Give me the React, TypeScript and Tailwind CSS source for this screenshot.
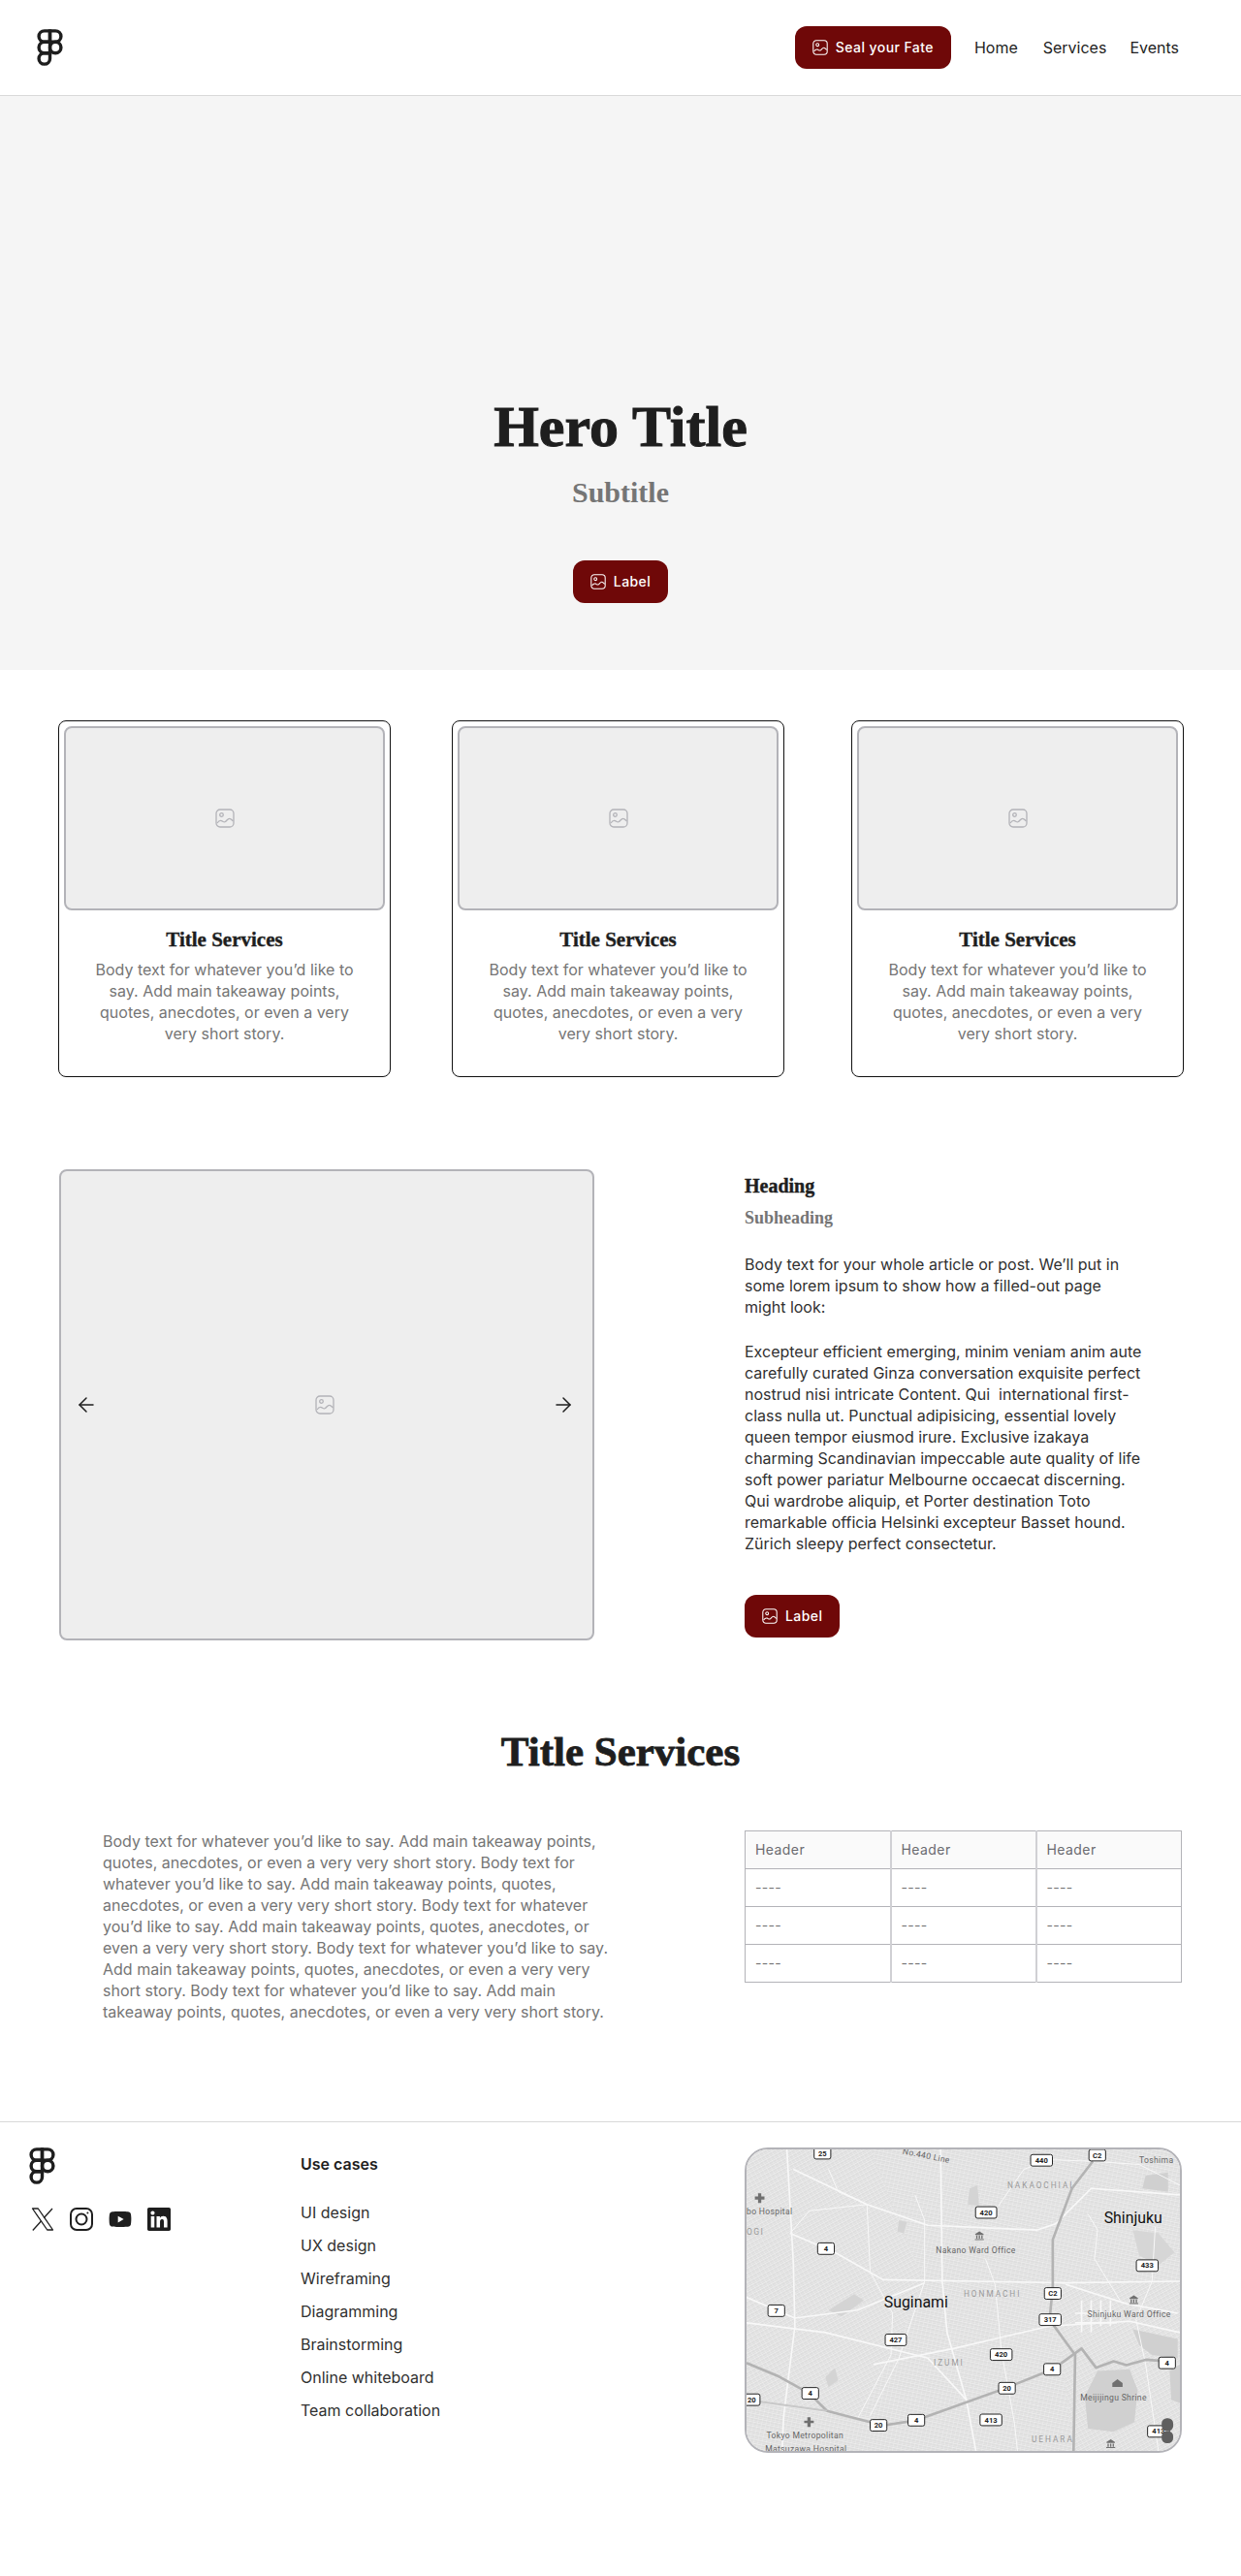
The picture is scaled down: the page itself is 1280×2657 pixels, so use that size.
import { ArrowLeft, ArrowRight } from "lucide-react";
import { FaLinkedin, FaYoutube } from "react-icons/fa6";

const BLURB = "Body text for whatever you’d like to say. Add main takeaway points, quotes, anecdotes, or even a very very short story.";
const LONG_BLURB = [BLURB, BLURB, BLURB, BLURB, BLURB].join(" ");
const ARTICLE = "Excepteur efficient emerging, minim veniam anim aute carefully curated Ginza conversation exquisite perfect nostrud nisi intricate Content. Qui\u00a0 international first-class nulla ut. Punctual adipisicing, essential lovely queen tempor eiusmod irure. Exclusive izakaya charming Scandinavian impeccable aute quality of life soft power pariatur Melbourne occaecat discerning. Qui wardrobe aliquip, et Porter destination Toto remarkable officia Helsinki excepteur Basset hound. Zürich sleepy perfect consectetur.";
const USE_CASES = ["UI design", "UX design", "Wireframing", "Diagramming", "Brainstorming", "Online whiteboard", "Team collaboration"];

const ImageIcon = ({ className }: { className?: string }) => (
  <svg viewBox="0 0 20 20" fill="none" stroke="currentColor" strokeWidth="1.3" className={className}>
    <rect x="1" y="1" width="18" height="18" rx="4" />
    <circle cx="6.5" cy="6.5" r="1.8" />
    <path d="M2 15c1.5-2.2 3-3 4.5-2.4S9 14.6 10.500 13.500s2.500-3.200 4-3.200 2.500 1.200 4 2.700" />
  </svg>
);

const FigmaLogo = ({ className }: { className?: string }) => (
  <svg viewBox="-2 -2 28 40" fill="none" stroke="#1e1e1e" strokeWidth="3.600" className={className}>
    <path d="M12 0H6a6 6 0 0 0 0 12h6z" />
    <path d="M12 0h6a6 6 0 0 1 0 12h-6z" />
    <path d="M12 12H6a6 6 0 0 0 0 12h6z" />
    <circle cx="18" cy="18" r="6" />
    <path d="M6 24h6v6a6 6 0 1 1-6-6z" />
  </svg>
);

const XLogo = () => (
  <svg viewBox="0 0 24 24" fill="none" stroke="#1e1e1e" className="h-6 w-6">
    <path d="M1.500 1h5.800l15.200 22h-5.800z" strokeWidth="1.300" strokeLinejoin="round" />
    <path d="M22 1l-8.800 9.800M10.600 13.700 1.800 23.500" strokeWidth="1.300" />
  </svg>
);

const InstagramLogo = () => (
  <svg viewBox="0 0 24 24" fill="none" stroke="#1e1e1e" strokeWidth="2" className="h-6 w-6">
    <rect x="1" y="1" width="22" height="22" rx="6" />
    <circle cx="12" cy="12" r="5.500" />
    <circle cx="18.400" cy="5.600" r="1" fill="#1e1e1e" stroke="none" />
  </svg>
);

const LabelButton = ({ children = "Label" }: { children?: string }) => (
  <button className="flex h-11 items-center gap-2 rounded-xl bg-[#6f0808] px-[18px] font-['Inter',sans-serif] text-sm font-medium tracking-[0.03em] text-white">
    <ImageIcon className="h-4 w-4" />
    {children}
  </button>
);

const ServiceCard = ({ className }: { className: string }) => (
  <div className={`h-[368px] w-[343px] shrink-0 rounded-lg border border-[#111111] p-[5px] ${className}`}>
    <div className="flex h-[190px] items-center justify-center rounded-lg border-2 border-[#b3b3b8] bg-[#eeeeee] text-[#b3b3b8]">
      <ImageIcon className="h-5 w-5" />
    </div>
    <h3 className="mt-4 text-center font-['Liberation_Serif',serif] text-[21px] font-bold leading-[29px] text-[#1e1e1e] [-webkit-text-stroke:0.4px_#1e1e1e]">Title Services</h3>
    <p className="mx-auto mt-[5px] w-[290px] text-center text-base leading-[22px] text-[#757575]">{BLURB}</p>
  </div>
);

const Shield = ({ x, y, w = 52, label }: { x: number; y: number; w?: number; label: string }) => (
  <g>
    <rect x={x - w / 2} y={y - 18} width={w} height={36} rx="6" fill="#fff" stroke="#222" strokeWidth="3" />
    <text x={x} y={y + 8} textAnchor="middle" fontSize="23" fontWeight="700" fill="#222">{label}</text>
  </g>
);

const MapArt = () => (
  <svg viewBox="54 48 1353 942" preserveAspectRatio="none" className="h-full w-full font-['Roboto',sans-serif]">
    <defs>
      <pattern id="streets" width="13" height="13" patternUnits="userSpaceOnUse" patternTransform="rotate(12)">
        <path d="M0 0H13M0 6.500H13M0 0V13" stroke="#f4f4f4" strokeWidth="1.600" />
      </pattern>
      <pattern id="streets2" width="13" height="13" patternUnits="userSpaceOnUse" patternTransform="rotate(-28)">
        <path d="M0 0H13M0 6.500H13M0 0V13" stroke="#f4f4f4" strokeWidth="1.600" />
      </pattern>
    </defs>
    <rect x="54" y="48" width="1353" height="942" fill="#dedede" />
    <rect x="54" y="48" width="1353" height="942" fill="url(#streets)" />
    <path d="M54 48H440L610 465 400 890 54 830Z" fill="#dedede" />
    <path d="M54 48H440L610 465 400 890 54 830Z" fill="url(#streets2)" />
    <path d="M1010 480 1407 460V990H1075Z" fill="#dedede" />
    <path d="M1010 480 1407 460V990H1075Z" fill="url(#streets2)" />
    {/* parks and large blocks */}
    <g fill="#d0d0d0">
      <path d="M1150 740 1250 735 1275 800 1265 900 1200 930 1120 920 1110 820Z" />
      <path d="M1260 610 1400 640 1400 700 1320 690 1280 660Z" />
      <path d="M1300 130 1370 120 1370 180 1290 170Z" />
      <path d="M1375 740 1407 720 1407 840 1380 830Z" />
      <path d="M750 170 775 160 780 225 745 220Z" fill="#d4d4d4" />
      <path d="M310 550 390 500 420 520 350 570Z" fill="#d4d4d4" />
      <path d="M300 760 330 730 340 770 310 790Z" fill="#d4d4d4" />
      <path d="M530 270 555 275 545 310 525 305Z" fill="#d4d4d4" />
      <path d="M1260 300 1340 310 1390 370 1340 410 1280 380Z" fill="#d6d6d6" />
    </g>
    {/* surface roads */}
    <g fill="none" stroke="#f8f8f8" strokeWidth="5" strokeLinejoin="round">
      <path d="M180 48 200 400 205 600 170 880 165 990" />
      <path d="M660 48 665 460 680 620 740 830 770 990" />
      <path d="M200 110 430 220 620 285 960 300 1020 280 1130 170 1407 190" />
      <path d="M190 310 330 370 480 455 1050 465 1407 460" />
      <path d="M54 510 205 575 400 550 610 465" />
      <path d="M54 590 300 620 620 700 740 830" />
      <path d="M450 720 700 670 1000 600 1250 585 1407 620" />
      <path d="M54 830 440 890" stroke="#ececec" />
      <path d="M310 110 340 180 430 220 440 430 510 560 505 690 400 890" strokeWidth="3" />
      <path d="M580 190 610 270 610 460 530 700 440 880" strokeWidth="3" />
      <path d="M190 310 250 240 430 220" strokeWidth="3" />
      <path d="M840 225 920 110 1000 80 1130 85 1280 95 1407 160" strokeWidth="3" />
      <path d="M800 390 830 470 850 680 890 900 900 990" strokeWidth="3" />
      <path d="M1050 470 1240 530 1400 560" />
      <path d="M1100 520 1100 620M1130 520 1130 620M1160 520 1160 600M1190 520 1190 600M1080 560 1210 560M1080 590 1210 590" strokeWidth="5" />
      <path d="M1330 290 1320 460 1270 580 1300 720 1340 990" strokeWidth="3" />
      <path d="M1120 250 1150 300 1140 390 1220 520" strokeWidth="3" />
    </g>
    {/* expressways */}
    <g fill="none" stroke="#b3b3b3" strokeWidth="8" strokeLinejoin="round">
      <path d="M1135 85 1070 170 1010 330 1010 480 1000 580 1080 690 1075 990" />
      <path d="M54 715 150 755 250 810 305 865 440 900 470 912 580 895 680 860 860 795 1010 735 1100 670 1145 730 1200 710 1240 722 1300 705 1370 710" />
      <path d="M54 830 305 865" stroke="#c8c8c8" strokeWidth="6" />
    </g>
    <g fill="#666666" fontSize="26" letterSpacing="1">
      <text x="54" y="252">bo Hospital</text>
      <text x="54" y="314" fill="#999" letterSpacing="4">OGI</text>
      <text x="645" y="372">Nakano Ward Office</text>
      <text x="1118" y="572">Shinjuku Ward Office</text>
      <text x="1096" y="834">Meijijingu Shrine</text>
      <text x="116" y="952">Tokyo Metropolitan</text>
      <text x="112" y="994">Matsuzawa Hospital</text>
      <text x="1280" y="90">Toshima</text>
      <text x="540" y="62" transform="rotate(11 540 62)">No.440 Line</text>
      <g fill="#999" letterSpacing="6" fontSize="25">
        <text x="868" y="170">NAKAOCHIAI</text>
        <text x="732" y="508">HONMACHI</text>
        <text x="638" y="724">IZUMI</text>
        <text x="944" y="962">UEHARA</text>
      </g>
    </g>
    <text x="1170" y="278" fontSize="48" fill="#111">Shinjuku</text>
    <text x="483" y="542" fontSize="48" fill="#111">Suginami</text>
    <g fill="#707070">
      <path d="M90 185h10v10h10v10h-10v10H90v-10H80v-10h10z" />
      <path d="M244 885h10v10h10v8h-10v12h-10v-12h-10v-8h10z" />
      <path d="M768 312 781 304 794 312v3H768zM771 317h4v10h-4zM779 317h4v10h-4zM787 317h4v10h-4zM767 328h28v3H767z" />
      <path d="M1250 512 1263 504 1276 512v3H1250zM1253 517h4v10h-4zM1261 517h4v10h-4zM1269 517h4v10h-4zM1249 528h28v3H1249z" />
      <path d="M1178 962 1191 954 1204 962v3H1178zM1181 967h4v10h-4zM1189 967h4v10h-4zM1197 967h4v10h-4zM1177 978h28v3H1177z" />
      <path d="M1196 778 1212 766 1228 778v12h-32z" />
    </g>
    <Shield x={291} y={60} label="25" />
    <Shield x={975} y={82} w={68} label="440" />
    <Shield x={1149} y={66} label="C2" />
    <Shield x={802} y={245} w={66} label="420" />
    <Shield x={302} y={358} label="4" />
    <Shield x={1305} y={411} w={68} label="433" />
    <Shield x={1010} y={498} label="C2" />
    <Shield x={147} y={552} label="7" />
    <Shield x={1002} y={580} w={68} label="317" />
    <Shield x={520} y={643} w={66} label="427" />
    <Shield x={849} y={689} w={68} label="420" />
    <Shield x={1367} y={715} label="4" />
    <Shield x={1008} y={735} label="4" />
    <Shield x={867} y={794} label="20" />
    <Shield x={253} y={810} label="4" />
    <Shield x={70} y={830} label="20" />
    <Shield x={466} y={910} label="20" />
    <Shield x={584} y={894} label="4" />
    <Shield x={817} y={893} w={68} label="413" />
    <Shield x={1340} y={929} w={68} label="413" />
    <g fill="#5f5f5f">
      <rect x="1350" y="888" width="36" height="40" rx="16" />
      <rect x="1350" y="928" width="36" height="38" rx="16" />
    </g>
  </svg>
);

export default function App() {
  return (
    <div className="h-[2657px] bg-white font-['Inter',sans-serif] text-[#1e1e1e]">
      {/* Header */}
      <header className="flex h-[99px] items-center justify-between border-b border-[#d9d9d9] pl-[38px] pr-[64px]">
        <FigmaLogo className="h-[38px] w-[27px]" />
        <nav className="flex items-center gap-6 text-base">
          <LabelButton>Seal your Fate</LabelButton>
          <a className="mr-[2px]">Home</a>
          <a>Services</a>
          <a>Events</a>
        </nav>
      </header>

      {/* Hero */}
      <section className="flex h-[592px] flex-col items-center bg-[#f5f5f5] pt-[302px]">
        <h1 className="font-['Liberation_Serif',serif] text-[60px] font-bold leading-[78px] [-webkit-text-stroke:1px_#1e1e1e]">Hero Title</h1>
        <h2 className="mt-[11px] font-['Liberation_Serif',serif] text-[30px] font-bold leading-[36px] text-[#757575]">Subtitle</h2>
        <div className="mt-[52px]"><LabelButton /></div>
      </section>

      {/* Service cards */}
      <section className="flex pl-[60px] pt-[52px]">
        <ServiceCard className="" />
        <ServiceCard className="ml-[63px]" />
        <ServiceCard className="ml-[69px]" />
      </section>

      {/* Carousel + article */}
      <section className="mt-[95px] flex pl-[61px]">
        <div className="flex h-[486px] w-[552px] items-center justify-between rounded-lg border-2 border-[#b3b3b8] bg-[#eeeeee] pl-[14px] pr-[18px]">
          <ArrowLeft className="h-6 w-6" strokeWidth={1.5} />
          <ImageIcon className="h-5 w-5 text-[#b3b3b8]" />
          <ArrowRight className="h-6 w-6" strokeWidth={1.5} />
        </div>
        <div className="ml-[155px] w-[412px] pt-[3px]">
          <h3 className="font-['Liberation_Serif',serif] text-[20px] font-bold leading-[29px] [-webkit-text-stroke:0.4px_#1e1e1e]">Heading</h3>
          <h4 className="mt-[6px] font-['Liberation_Serif',serif] text-[18px] font-bold leading-[24px] text-[#757575]">Subheading</h4>
          <p className="mt-[25px] text-base leading-[22px] text-[#303030]">Body text for your whole article or post. We’ll put in some lorem ipsum to show how a filled-out page might look:</p>
          <p className="mt-[24px] text-base leading-[22px] text-[#303030]">{ARTICLE}</p>
          <div className="mt-[42px]"><LabelButton /></div>
        </div>
      </section>

      {/* Title + table */}
      <h2 className="mt-[86px] text-center font-['Liberation_Serif',serif] text-[43px] font-bold leading-[58px] [-webkit-text-stroke:0.8px_#1e1e1e]">Title Services</h2>
      <section className="mt-[52px] flex pl-[106px]">
        <p className="w-[525px] text-base leading-[22px] text-[#757575]">{LONG_BLURB}</p>
        <table className="ml-[137px] h-[157px] w-[451px] table-fixed border border-[#b3b3b8] text-sm text-[#757575]">
          <thead>
            <tr className="h-[39px] bg-[#fafafa] text-left">
              {[0, 1, 2].map((i) => (
                <th key={i} className="border-b border-l-2 border-b-[#b3b3b8] border-l-[#d0d0d4] px-[10px] font-normal tracking-[0.03em] text-[#6b6b70] first:border-l-0">Header</th>
              ))}
            </tr>
          </thead>
          <tbody>
            {[0, 1, 2].map((row) => (
              <tr key={row} className="h-[39px] border-b border-[#b3b3b8] last:border-b-0">
                {[0, 1, 2].map((i) => (
                  <td key={i} className="border-l-2 border-l-[#d0d0d4] px-[10px] tracking-[0.02em] first:border-l-0">----</td>
                ))}
              </tr>
            ))}
          </tbody>
        </table>
      </section>

      {/* Footer */}
      <footer className="mt-[102px] flex border-t border-[#d9d9d9] pt-[26px]">
        <div className="w-[310px] pl-[30px]">
          <FigmaLogo className="h-[38px] w-[27px]" />
          <div className="mt-[24px] flex gap-4 pl-[2px] text-[#1e1e1e]">
            <XLogo />
            <InstagramLogo />
            <FaYoutube className="h-6 w-6" />
            <FaLinkedin className="h-6 w-6" viewBox="0 32 448 448" />
          </div>
        </div>
        <div className="w-[458px] pt-[6px]">
          <h5 className="text-base font-semibold leading-[22px]">Use cases</h5>
          <ul className="mt-[28px] flex flex-col gap-3 text-base leading-[22px] text-[#303030]">
            {USE_CASES.map((item) => <li key={item}>{item}</li>)}
          </ul>
        </div>
        <div className="h-[315px] w-[451px] overflow-hidden rounded-[24px] border-2 border-[#b3b3b8]">
          <MapArt />
        </div>
      </footer>
    </div>
  );
}
